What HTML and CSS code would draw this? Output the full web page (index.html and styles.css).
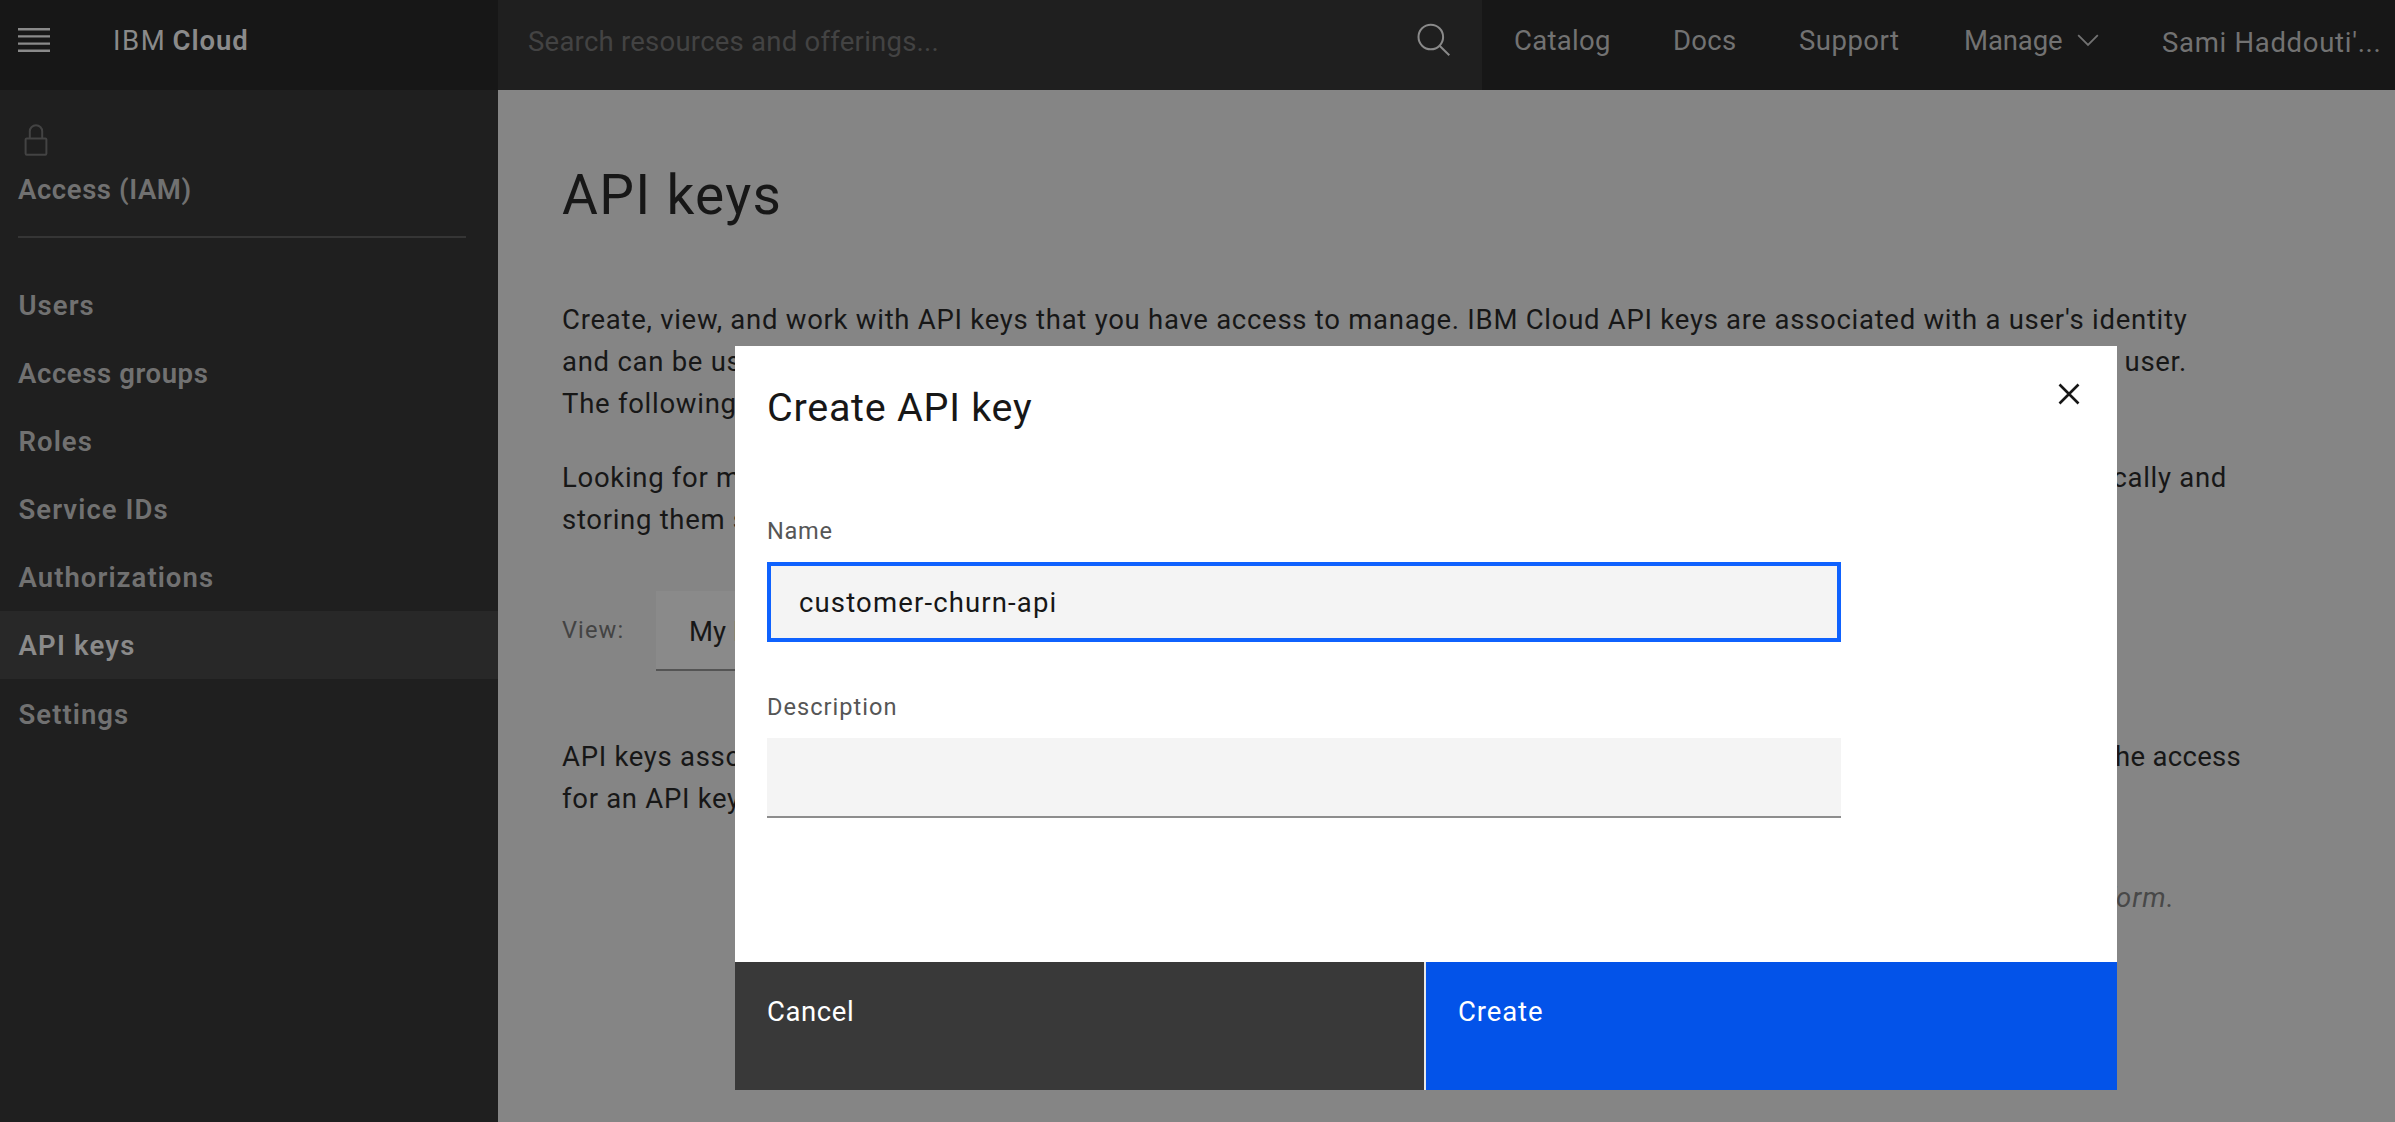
FILE: index.html
```html
<!DOCTYPE html>
<html lang="en">
<head>
<meta charset="utf-8">
<title>IBM Cloud - API keys</title>
<link rel="stylesheet" href="styles.css">
</head>
<body>
<header class="header">
  <div class="brand">
    <svg class="menu-icon" width="32" height="24" viewBox="0 0 32 24" fill="#8a8a8a"><path d="M0 0h32v2.4H0zM0 7.2h32v2.4H0zM0 14.4h32v2.4H0zM0 21.6h32V24H0z"/></svg>
    <span class="brand-name"><span class="brand-ibm">IBM</span><b class="brand-cloud">Cloud</b></span>
  </div>
  <div class="search">
    <span class="search-text">Search resources and offerings...</span>
    <svg class="search-icon" width="34" height="34" viewBox="0 0 34 34" fill="none" stroke="#8a8a8a" stroke-width="2"><circle cx="13.8" cy="14" r="12.3"/><path d="M22.6 22.8L32.3 32.3"/></svg>
  </div>
  <nav class="nav">
    <a class="nav-catalog">Catalog</a>
    <a class="nav-docs">Docs</a>
    <a class="nav-support">Support</a>
    <a class="nav-manage">Manage</a>
    <svg class="chevron" width="22" height="13" viewBox="0 0 22 13" fill="none" stroke="#727272" stroke-width="1.8"><path d="M1.2 1.2L11 11L20.8 1.2"/></svg>
    <a class="nav-account">Sami Haddouti'...</a>
  </nav>
</header>
<div class="body">
  <aside class="sidebar">
    <div class="side-head">
      <svg class="lock" width="24" height="34" viewBox="0 0 24 34" fill="none" stroke="#434343" stroke-width="2"><rect x="1.6" y="14.4" width="20.8" height="16.4" rx="1.2"/><path d="M5.8 14.2V7.4a6.2 6.2 0 0 1 12.4 0v6.8"/></svg>
      <div class="side-title">Access (IAM)</div>
    </div>
    <ul class="side-list">
      <li>Users</li>
      <li class="snug">Access groups</li>
      <li>Roles</li>
      <li>Service IDs</li>
      <li>Authorizations</li>
      <li class="active">API keys</li>
      <li class="last">Settings</li>
    </ul>
  </aside>
  <main class="main">
    <h1>API keys</h1>
    <div class="para para-intro">
      <div class="line">Create, view, and work with API keys that you have access to manage. IBM Cloud API keys are associated with a user's identity</div>
      <div class="line"><span>and can be used to access cloud platform</span><span>services as the user.</span></div>
      <div class="line"><span>The following table lists the API keys</span></div>
    </div>
    <div class="para para-more">
      <div class="line"><span>Looking for more options?</span><span>programmatically and</span></div>
      <div class="line"><span>storing them securely</span></div>
    </div>
    <div class="view">
      <span class="view-label">View:</span>
      <div class="select">My IBM Cloud API keys</div>
    </div>
    <div class="para para-assoc">
      <div class="line"><span>API keys associated with a user</span><span class="tight">have the access</span></div>
      <div class="line"><span>for an API key</span></div>
    </div>
    <div class="hint">API keys for the platform.</div>
  </main>
</div>
<section class="modal" role="dialog">
  <div class="modal-head">
    <h2>Create API key</h2>
    <svg class="close" width="22" height="22" viewBox="0 0 22 22" stroke="#161616" stroke-width="2.6"><path d="M1.5 1.5L20.5 20.5M20.5 1.5L1.5 20.5"/></svg>
  </div>
  <div class="modal-body">
    <label class="label-name">Name</label>
    <div class="input focused">customer-churn-api</div>
    <label class="label-desc">Description</label>
    <div class="input"></div>
  </div>
  <div class="modal-foot">
    <div class="btn cancel">Cancel</div>
    <div class="btn create">Create</div>
  </div>
</section>
</body>
</html>
```
FILE: styles.css
```css
* { box-sizing: border-box; }

body {
  margin: 0;
  height: 1122px;
  overflow: hidden;
  display: flex;
  flex-direction: column;
  background: #858585;
  color: #171717;
  font-family: Roboto, "Liberation Sans", sans-serif;
  font-size: 27.5px;
  line-height: 42px;
  white-space: nowrap;
}

/* top bar */
.header {
  flex: none;
  display: flex;
  height: 90px;
  background: #171717;
}

.brand {
  width: 498px;
  display: flex;
  align-items: center;
  padding: 0 0 9px 18px;
  color: #8a8a8a;
}

.menu-icon { margin-right: 63px; margin-bottom: 1px; }
.brand-name { display: flex; }
.brand-ibm { width: 59.5px; letter-spacing: 1.6px; }
.brand-cloud { font-weight: 600; letter-spacing: .95px; }

.search {
  width: 984px;
  display: flex;
  align-items: center;
  justify-content: space-between;
  padding: 0 31px 9px 30px;
  background: #1f1f1f;
  color: #434343;
}

.search-text { padding-top: 3px; letter-spacing: .24px; }
.search-icon { margin-bottom: 2px; }

.nav {
  flex: 1;
  display: flex;
  align-items: center;
  padding: 0 0 9px 32px;
  color: #727272;
}

.nav-catalog { width: 159px; letter-spacing: .3px; }
.nav-docs { width: 126px; letter-spacing: .29px; }
.nav-support { width: 165px; letter-spacing: .49px; }
.nav-manage { width: 113px; letter-spacing: -.1px; }
.chevron { margin-right: 63px; margin-bottom: 1px; }
.nav-account { padding-top: 4px; letter-spacing: .7px; }

/* side navigation */
.body { flex: 1; display: flex; }

.sidebar {
  flex: none;
  width: 498px;
  background: #1f1f1f;
  color: #717171;
  font-weight: 600;
}

.side-head {
  margin: 34px 32px 0 18px;
  height: 114px;
  border-bottom: 2px solid #353535;
}

.lock { display: block; margin-left: 6px; }
.side-title { padding-top: 11px; letter-spacing: .58px; }

.side-list { list-style: none; margin: 33px 0 0; padding: 0; }

.side-list li {
  height: 68px;
  padding: 1px 0 0 18.5px;
  line-height: 67px;
  letter-spacing: 1.05px;
}

.side-list .snug { padding-left: 18px; letter-spacing: .6px; }
.side-list .active { background: #282828; color: #8a8a8a; letter-spacing: 1.2px; }
.side-list .last { padding-top: 2px; }

/* page content */
.main { padding: 73px 0 0 64px; letter-spacing: .7px; }

h1 {
  margin: 0 0 72px;
  font-size: 55px;
  line-height: 64px;
  font-weight: 400;
  letter-spacing: 1.3px;
}

.line { display: flex; justify-content: space-between; height: 42px; }
.para-intro { width: 1625px; letter-spacing: .73px; }
.para-more { width: 1665px; margin-top: 32px; }
.para-assoc { width: 1679px; margin-top: 65px; }
.tight { letter-spacing: .3px; }

.view { display: flex; margin-top: 50px; height: 80px; }

.view-label {
  width: 94px;
  font-size: 23.6px;
  line-height: 78px;
  color: #434343;
  letter-spacing: 1.1px;
}

.select {
  width: 600px;
  padding: 2px 0 0 33px;
  line-height: 77px;
  background: #8a8a8a;
  border-bottom: 2px solid #545454;
  letter-spacing: 0;
}

.hint {
  width: 1613px;
  margin-top: 57px;
  text-align: right;
  font-style: italic;
  color: #484848;
  letter-spacing: 1.1px;
}

/* dialog over the page */
.modal {
  position: absolute;
  z-index: 2;
  left: 735px;
  top: 346px;
  width: 1382px;
  height: 744px;
  display: flex;
  flex-direction: column;
  background: #fff;
}

.modal-head {
  display: flex;
  justify-content: space-between;
  padding: 37px 37px 0 32px;
}

h2 {
  margin: 0;
  font-size: 39.5px;
  line-height: 49px;
  font-weight: 400;
  letter-spacing: .74px;
}

.close { display: block; }

.modal-body {
  flex: 1;
  display: flex;
  flex-direction: column;
  width: 1106px;
  padding: 83px 0 0 32px;
}

.modal-body label {
  font-size: 23.6px;
  line-height: 32px;
  color: #565656;
}

.label-name { letter-spacing: .71px; }
.label-desc { margin-top: 49px; letter-spacing: 1.01px; }

.input {
  height: 80px;
  margin-top: 15px;
  padding: 2px 32px 0;
  line-height: 76px;
  background: #f4f4f4;
  border-bottom: 2px solid #8d8d8d;
  letter-spacing: 1.15px;
}

.input.focused {
  padding: 1px 28px 0;
  border: 4px solid #0f62fe;
  line-height: 72px;
}

.modal-foot { display: flex; height: 128px; }

.btn { padding: 29px 0 0 32px; color: #fff; }

.cancel {
  width: 691px;
  background: #393939;
  border-right: 2px solid #e6e6e6;
  letter-spacing: .6px;
}

.create { flex: 1; background: #0353e9; letter-spacing: .9px; }
```
